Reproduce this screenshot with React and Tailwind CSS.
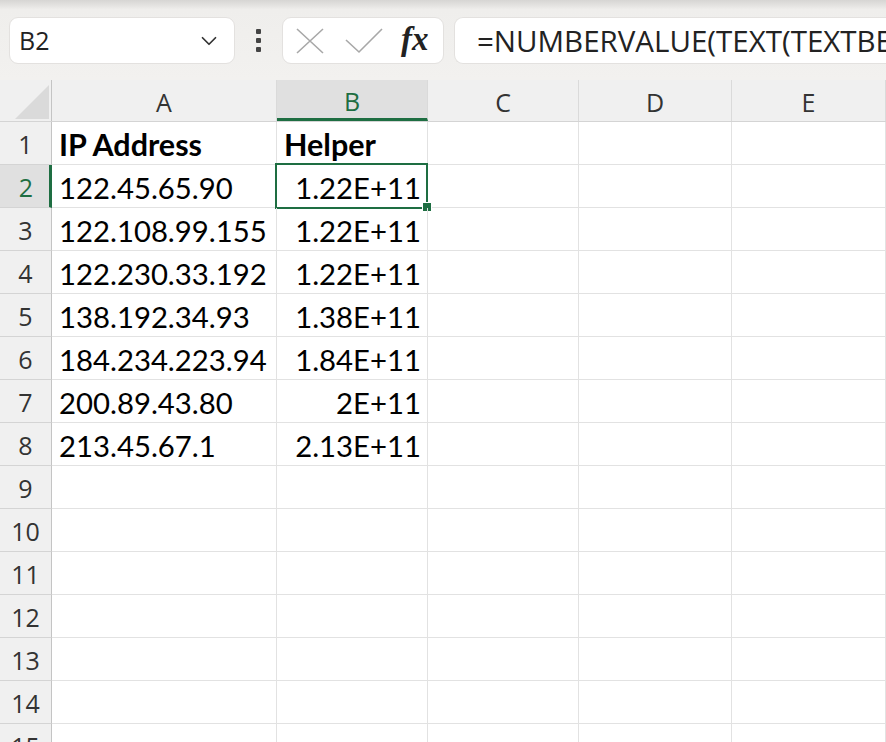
import { ChevronDown } from "lucide-react";

const cols = [
  { key: "A", w: "w-[225px]" },
  { key: "B", w: "w-[151px]" },
  { key: "C", w: "w-[151px]" },
  { key: "D", w: "w-[153px]" },
  { key: "E", w: "flex-1" },
];

const rows = [
  ["IP Address", "Helper"],
  ["122.45.65.90", "1.22E+11"],
  ["122.108.99.155", "1.22E+11"],
  ["122.230.33.192", "1.22E+11"],
  ["138.192.34.93", "1.38E+11"],
  ["184.234.223.94", "1.84E+11"],
  ["200.89.43.80", "2E+11"],
  ["213.45.67.1", "2.13E+11"],
];

const headFont = { fontFamily: '"Open Sans", sans-serif' };
const cellFont = { fontFamily: 'Lato, "Liberation Sans", sans-serif' };

function Toolbar() {
  return (
    <div className="h-[80px] bg-gradient-to-b from-[#d6d5d3] via-[#efeeec] via-[12%] to-[#f2f1ef] flex items-start pt-[17px] pl-[9px]" style={headFont}>
      <div className="w-[226px] h-[47px] bg-white rounded-[9px] border border-[#e3e1df] flex items-center pl-[9px] pr-[12px] justify-between">
        <span className="text-[25px] text-[#222] leading-none">B2</span>
        <ChevronDown size={26} strokeWidth={1.6} className="text-[#333]" />
      </div>
      <div className="w-[47px] h-[47px] flex flex-col items-center justify-center gap-[4px]">
        <span className="w-[5px] h-[5px] bg-[#444] rounded-[1px]" />
        <span className="w-[5px] h-[5px] bg-[#444] rounded-[1px]" />
        <span className="w-[5px] h-[5px] bg-[#444] rounded-[1px]" />
      </div>
      <div className="w-[162px] h-[47px] bg-white rounded-[9px] border border-[#e3e1df] flex items-center pl-[12px]">
        <svg width="30" height="26" viewBox="0 0 30 26" className="shrink-0">
          <path d="M2 1 L28 25 M28 1 L2 25" stroke="#a8a8a8" strokeWidth="1.6" fill="none" />
        </svg>
        <svg width="38" height="26" viewBox="0 0 38 26" className="shrink-0 ml-[20px]">
          <path d="M1 12 L14 24 L37 1" stroke="#a8a8a8" strokeWidth="1.6" fill="none" />
        </svg>
        <span
          className="ml-[18px] text-[33px] italic font-bold text-[#222] leading-none -mt-[2px]"
          style={{ fontFamily: '"Liberation Serif", "DejaVu Serif", serif' }}
        >
          fx
        </span>
      </div>
      <div className="ml-[10px] flex-1 h-[47px] bg-white rounded-l-[9px] border border-r-0 border-[#e3e1df] flex items-center pl-[22px] overflow-hidden whitespace-nowrap">
        <span className="text-[29.5px] text-[#222] leading-none">=NUMBERVALUE(TEXT(TEXTBEFORE(A2,".")</span>
      </div>
    </div>
  );
}

function HeaderRow() {
  return (
    <div className="flex h-[42px] bg-[#f0f0f0] border-b border-[#d4d4d4]" style={headFont}>
      <div className="w-[52px] border-r border-[#c4c4c4] relative overflow-hidden">
        <svg width="52" height="42" className="absolute left-0 top-0">
          <polygon points="15,39 49,39 49,5" fill="#dadada" />
        </svg>
      </div>
      {cols.map((c) => {
        const sel = c.key === "B";
        return (
          <div
            key={c.key}
            className={`${c.w} flex items-center justify-center text-[25px] border-r border-[#dadada] ${
              sel ? "bg-[#e0e0e0] text-[#1e6e42] border-b-[3px] border-b-[#1e6e42] pt-[6px]" : "text-[#333] pt-[4px]"
            }`}
          >
            {c.key}
          </div>
        );
      })}
    </div>
  );
}

function Row({ n, data }) {
  const sel = n === 2;
  return (
    <div className="flex h-[43px] border-b border-[#e2e2e2]">
      <div
        className={`w-[52px] shrink-0 flex items-center justify-center text-[25px] pt-[3px] border-r ${
          sel ? "bg-[#e0e0e0] text-[#1e6e42] border-r-[3px] border-r-[#1e6e42] pl-[3px]" : "bg-[#f0f0f0] text-[#333] border-r-[#c4c4c4]"
        } border-b border-b-[#d4d4d4] -mb-px`}
        style={headFont}
      >
        {n}
      </div>
      {cols.map((c, i) => {
        const v = data ? data[i] : undefined;
        const bold = n === 1;
        const right = n > 1 && i === 1;
        return (
          <div
            key={c.key}
            className={`${c.w} relative flex items-center pl-[7px] pr-[6px] pt-[3px] text-black whitespace-nowrap border-r border-[#e2e2e2] ${
              right ? "justify-end" : "justify-start"
            } ${bold ? "font-bold text-[30.5px]" : "text-[29.3px]"}`}
            style={cellFont}
          >
            {v}
            {sel && i === 1 && (
              <>
                <span className="absolute -left-[2px] -top-[2px] -right-[1px] -bottom-[2px] border-2 border-[#1e6e42] pointer-events-none" />
                <span className="absolute -right-[5px] -bottom-[5px] w-[10px] h-[10px] bg-[#1e6e42] border border-white" />
              </>
            )}
          </div>
        );
      })}
    </div>
  );
}

export default function App() {
  const all = Array.from({ length: 15 }, (_, i) => i + 1);
  return (
    <div className="w-[886px] h-[742px] overflow-hidden bg-white">
      <Toolbar />
      <HeaderRow />
      {all.map((n) => (
        <Row key={n} n={n} data={rows[n - 1]} />
      ))}
    </div>
  );
}
